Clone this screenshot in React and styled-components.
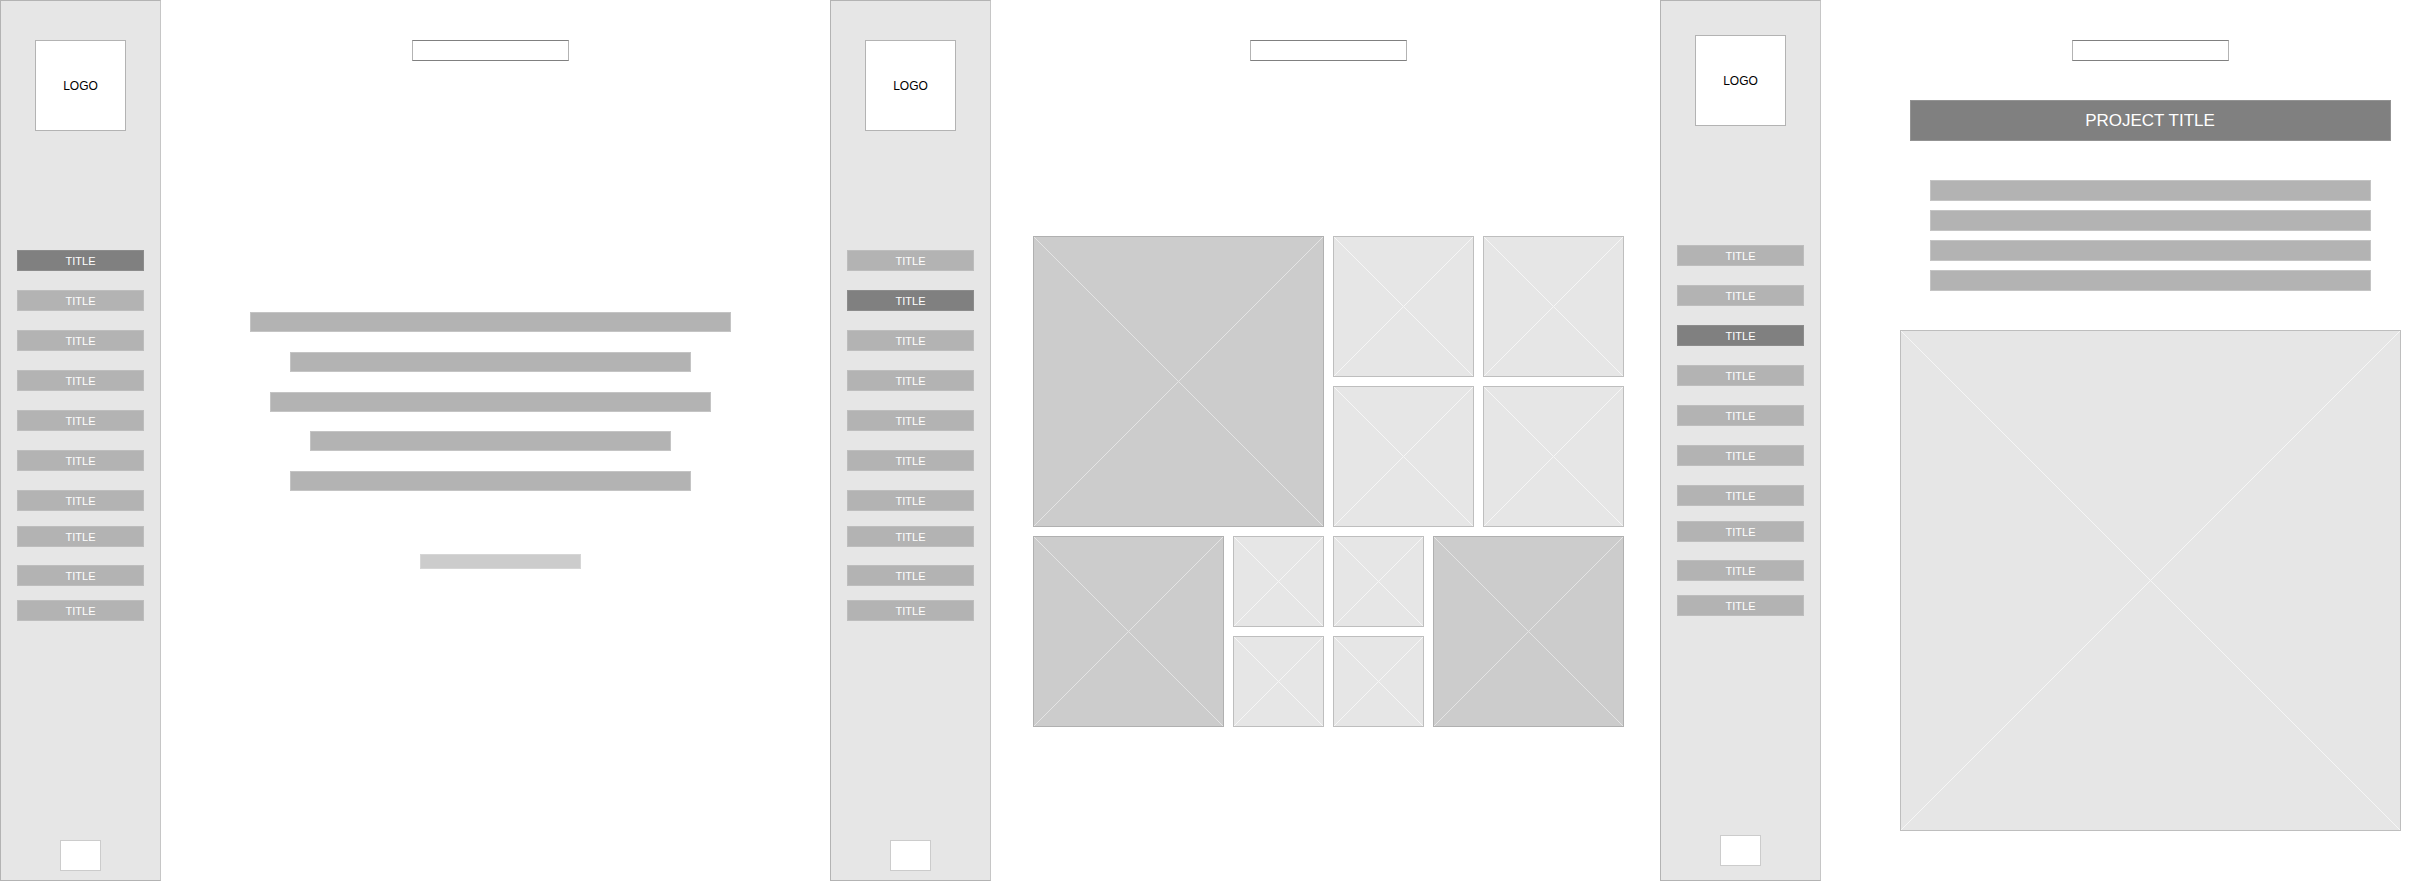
import React from 'react';
import styled, { createGlobalStyle } from 'styled-components';

const GlobalStyle = createGlobalStyle`
  html, body { margin: 0; padding: 0; background: #ffffff; overflow: hidden; }
  body { font-family: "Liberation Sans", Arial, Helvetica, sans-serif; }
  * { box-sizing: border-box; }
`;

const Page = styled.div`
  display: flex;
  width: 2422px;
  height: 882px;
  overflow: hidden;
`;

const Panel = styled.section`
  flex: 0 0 830px;
  display: flex;
  align-items: flex-start;
`;

const Sidebar = styled.aside`
  flex: 0 0 161px;
  height: 881px;
  border: 1px solid #b3b3b3;
  border-right-color: #c6c6c6;
  background: #e6e6e6;
  display: flex;
  flex-direction: column;
  align-items: center;
  padding-top: ${(p) => 39 - p.$lift}px;
  padding-bottom: ${(p) => 9 + p.$lift}px;
`;

const Logo = styled.div`
  width: 91px;
  height: 91px;
  background: #ffffff;
  border: 1px solid #b3b3b3;
  display: flex;
  align-items: center;
  justify-content: center;
  font-size: 12px;
  color: #000000;
`;

const Nav = styled.nav`
  margin-top: 119px;
  width: 127px;
  display: flex;
  flex-direction: column;
`;

const NavItem = styled.div`
  height: 21px;
  margin-top: ${(p) => p.$gap}px;
  background: ${(p) => (p.$active ? '#808080' : '#b3b3b3')};
  border: 1px solid ${(p) => (p.$active ? '#8c8c8c' : '#bdbdbd')};
  color: #ffffff;
  font-size: 11px;
  display: flex;
  align-items: center;
  justify-content: center;
`;

const FooterBadge = styled.div`
  margin-top: auto;
  width: 41px;
  height: 31px;
  background: #ffffff;
  border: 1px solid #cccccc;
`;

const Content = styled.main`
  flex: 0 0 660px;
  margin-left: ${(p) => p.$shift}px;
  padding-top: 40px;
  display: flex;
  flex-direction: column;
  align-items: center;
`;

const SearchBox = styled.div`
  width: 157px;
  height: 21px;
  background: #ffffff;
  border: 1px solid #808080;
  border-left-color: #b3b3b3;
  border-right-color: #b3b3b3;
`;

const TextBlock = styled.div`
  margin-top: ${(p) => p.$top}px;
  display: flex;
  flex-direction: column;
  align-items: center;
  gap: ${(p) => p.$gap}px;
`;

const TextLine = styled.div`
  width: ${(p) => p.$w}px;
  height: ${(p) => p.$h}px;
  background: #b3b3b3;
  border: 1px solid #c4c4c4;
`;

const Caption = styled.div`
  margin-top: 63px;
  margin-left: ${(p) => p.$offset}px;
  width: 161px;
  height: 15px;
  background: #cccccc;
  border: 1px solid #d6d6d6;
`;

const Gallery = styled.div`
  margin-top: 175px;
  display: flex;
  flex-direction: column;
  gap: 9px;
`;

const GalleryRow = styled.div`
  display: flex;
  gap: 9px;
`;

const TileGrid = styled.div`
  display: grid;
  grid-template-columns: repeat(2, ${(p) => p.$size}px);
  grid-auto-rows: ${(p) => p.$size}px;
  gap: 9px;
`;

const ImageBox = styled.div`
  width: ${(p) => (p.$w ? `${p.$w}px` : 'auto')};
  height: ${(p) => (p.$h ? `${p.$h}px` : 'auto')};
  margin-top: ${(p) => p.$top || 0}px;
  background: ${(p) => (p.$dark ? '#cccccc' : '#e6e6e6')};
  border: 1px solid ${(p) => (p.$dark ? '#b0b0b0' : '#bebebe')};
  svg { display: block; width: 100%; height: 100%; }
`;

const ProjectTitle = styled.h1`
  margin: 39px 0 0;
  width: 481px;
  height: 41px;
  background: #808080;
  border: 1px solid #939393;
  color: #ffffff;
  font-size: 17px;
  font-weight: 400;
  display: flex;
  align-items: center;
  justify-content: center;
`;

const Placeholder = ({ w, h, dark, top }) => (
  <ImageBox $w={w} $h={h} $dark={dark} $top={top}>
    <svg viewBox="0 0 100 100" preserveAspectRatio="none">
      <line x1="0" y1="0" x2="100" y2="100" stroke={dark ? '#e4e4e4' : '#f6f6f6'} strokeWidth="1" vectorEffect="non-scaling-stroke" />
      <line x1="100" y1="0" x2="0" y2="100" stroke={dark ? '#e4e4e4' : '#f6f6f6'} strokeWidth="1" vectorEffect="non-scaling-stroke" />
    </svg>
  </ImageBox>
);

const GAPS = [0, 19, 19, 19, 19, 19, 19, 15, 18, 14];

const SideNav = ({ active, lift }) => (
  <Sidebar $lift={lift}>
    <Logo>LOGO</Logo>
    <Nav>
      {GAPS.map((g, i) => (
        <NavItem key={i} $gap={g} $active={i === active}>TITLE</NavItem>
      ))}
    </Nav>
    <FooterBadge />
  </Sidebar>
);

const TileSet = ({ size }) => (
  <TileGrid $size={size}>
    {[0, 1, 2, 3].map((i) => (
      <Placeholder key={i} />
    ))}
  </TileGrid>
);

export default function App() {
  return (
    <>
      <GlobalStyle />
      <Page>
        <Panel>
          <SideNav active={0} lift={0} />
          <Content $shift={-1}>
            <SearchBox />
            <TextBlock $top={251} $gap={19.75}>
              {[481, 401, 441, 361, 401].map((w, i) => (
                <TextLine key={i} $w={w} $h={20} />
              ))}
            </TextBlock>
            <Caption $offset={20} />
          </Content>
        </Panel>

        <Panel>
          <SideNav active={1} lift={0} />
          <Content $shift={7}>
            <SearchBox />
            <Gallery>
              <GalleryRow>
                <Placeholder w={291} h={291} dark />
                <TileSet size={141} />
              </GalleryRow>
              <GalleryRow>
                <Placeholder w={191} h={191} dark />
                <TileSet size={91} />
                <Placeholder w={191} h={191} dark />
              </GalleryRow>
            </Gallery>
          </Content>
        </Panel>

        <Panel>
          <SideNav active={2} lift={5} />
          <Content $shift={-1}>
            <SearchBox />
            <ProjectTitle>PROJECT TITLE</ProjectTitle>
            <TextBlock $top={39} $gap={9}>
              {[0, 1, 2, 3].map((i) => (
                <TextLine key={i} $w={441} $h={21} />
              ))}
            </TextBlock>
            <Placeholder w={501} h={501} top={39} />
          </Content>
        </Panel>
      </Page>
    </>
  );
}
